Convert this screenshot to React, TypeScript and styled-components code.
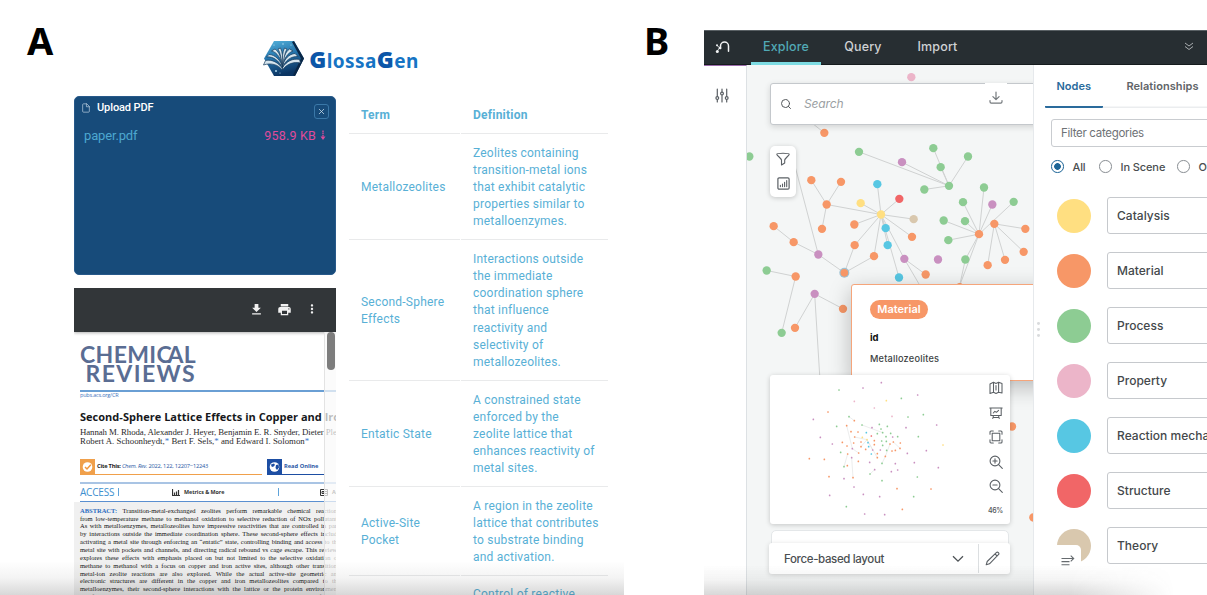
import React from 'react';
import styled, { createGlobalStyle } from 'styled-components';
import { FiFile, FiX, FiSearch } from 'react-icons/fi';
import { MdPrint, MdDownload, MdMoreVert } from 'react-icons/md';

const sans = `Roboto, "Liberation Sans", sans-serif`;
const inter = `Inter, "Liberation Sans", sans-serif`;
const serif = `"Liberation Serif", serif`;

const Global = createGlobalStyle`
  * { box-sizing: border-box; }
  html, body { margin: 0; padding: 0; background: #fff; overflow: hidden; }
  svg { display: block; flex: none; }
`;

const Figure = styled.main`
  display: flex;
  width: 1207px;
  height: 595px;
  overflow: hidden;
  background: #fff;
`;

const FigureLabel = styled.h2<{ $left: number }>`
  margin: 0;
  padding: 20.5px 0 0 ${p => p.$left}px;
  font: 700 38px/38px "Noto Sans", sans-serif;
  color: #000;
  height: 70px;
`;

/* ---------- Glossary app ---------- */

const GlossaryApp = styled.section`
  position: relative;
  width: 624px;
  height: 595px;
  flex: none;
  overflow: hidden;
`;

const BottomShade = styled.div<{ $h: number; $w: number; $fade?: boolean }>`
  position: absolute;
  left: 0;
  bottom: 0;
  width: ${p => p.$w}px;
  height: ${p => p.$h}px;
  pointer-events: none;
  background: linear-gradient(to bottom, rgba(60, 60, 60, 0), rgba(60, 60, 60, 0.06) 50%, rgba(60, 60, 60, 0.2));
  ${p => p.$fade && 'mask-image: linear-gradient(to right, #000 78%, transparent);'}
`;

const Masthead = styled.header`
  display: flex;
  height: 96px;
`;

const Brand = styled.div`
  display: flex;
  align-items: center;
  gap: 4px;
  padding: 21px 0 0 210px;
  height: 96px;
`;

const BrandName = styled.h1`
  margin: 0;
  padding-top: 3px;
  font: 700 19px/38px "Noto Sans", sans-serif;
  letter-spacing: 0.4px;
  color: #1674c4;
  b { font-size: 23px; color: #0c56a8; }
`;

const AppBody = styled.div`
  display: flex;
  gap: 13px;
  padding-left: 74px;
`;

const LeftColumn = styled.div`
  width: 262px;
  display: flex;
  flex-direction: column;
  gap: 13px;
`;

const UploadCard = styled.div`
  height: 179px;
  border-radius: 5px;
  background: #174b7a;
  border: 1px solid #27598a;
  font-family: ${sans};
`;

const UploadHead = styled.div`
  display: flex;
  align-items: center;
  height: 21px;
  padding: 0 6px 0 6px;
  color: #fff;
`;

const UploadTitle = styled.span`
  flex: 1;
  padding-left: 6px;
  font-size: 11px;
  font-weight: 500;
  letter-spacing: -0.1px;
`;

const CloseButton = styled.button`
  display: grid;
  place-items: center;
  width: 15px;
  height: 15px;
  margin-top: 7px;
  padding: 0;
  border: 1px solid #3a78a8;
  border-radius: 3px;
  background: transparent;
  color: #cfe0ee;
`;

const FileRow = styled.div`
  display: flex;
  justify-content: space-between;
  padding: 7.5px 9px 0 9px;
  font-size: 13px;
  line-height: 19px;
  letter-spacing: -0.15px;
  color: #4da7d0;
`;

const FileSize = styled.span`
  display: flex;
  align-items: center;
  gap: 4px;
  color: #e04a9a;
  font-size: 12.5px;
  letter-spacing: 0.2px;
`;

const Viewer = styled.div`
  height: 307px;
  overflow: hidden;
  background: #fff;
`;

const ViewerBar = styled.div`
  display: flex;
  align-items: center;
  justify-content: flex-end;
  gap: 13px;
  height: 44px;
  padding: 0 17.5px 2px 0;
  background: #323639;
  color: #f1f1f1;
  box-shadow: 0 1px 3px rgba(0, 0, 0, 0.3);
`;

const ViewerPage = styled.div`
  position: relative;
  width: 262px;
  height: 263px;
  overflow: hidden;
  white-space: nowrap;
  padding-top: 12.5px;
`;

const ScrollTrack = styled.div`
  position: absolute;
  right: 0;
  top: 0;
  width: 12px;
  height: 263px;
  padding: 0 2px;
  background: rgba(250, 250, 250, 0.72);
  border-left: 1px solid #e3e3e3;
`;

const ScrollThumb = styled.div`
  width: 8px;
  height: 38px;
  border-radius: 4px;
  background: #7d7d7d;
`;

const JournalLine = styled.div<{ $left: number; $ls: number }>`
  padding-left: ${p => p.$left}px;
  height: 19.7px;
  font: 700 23px/19.7px Lato, sans-serif;
  letter-spacing: ${p => p.$ls}px;
  color: #5a6d93;
`;

const TightA = styled.span`
  margin-left: -4.5px;
`;

const Rule = styled.div<{ $color: string; $top?: number }>`
  height: 1.4px;
  margin-left: 6px;
  margin-top: ${p => p.$top ?? 0}px;
  width: 256px;
  background: ${p => p.$color};
`;

const JournalUrl = styled.div`
  padding-left: 6px;
  height: 18px;
  font: 5.5px/7px "Open Sans", sans-serif;
  letter-spacing: -0.2px;
  color: #3f74bd;
`;

const PaperTitle = styled.div`
  padding-left: 6px;
  height: 18px;
  font: 700 11px/13px "Open Sans", sans-serif;
  letter-spacing: 0.02px;
  color: #16181b;
`;

const Authors = styled.div<{ $ls: number }>`
  padding-left: 6px;
  font: 8.8px/9.6px ${serif};
  letter-spacing: ${p => p.$ls}px;
  color: #2b2b2b;
  sup { font-size: 8.8px; line-height: 0; vertical-align: 0; color: #3a78d0; }
`;

const CiteRow = styled.div`
  display: flex;
  gap: 5px;
  margin: 12.5px 0 7px;
  padding-left: 6px;
  height: 16px;
  font: 5.7px/16px "Open Sans", sans-serif;
`;

const CiteBox = styled.div<{ $w: number; $color: string }>`
  display: flex;
  gap: 2px;
  width: ${p => p.$w}px;
  border-bottom: 1.5px solid ${p => p.$color};
  line-height: 15px;
  svg { background: ${p => p.$color}; }
`;

const CiteText = styled.span<{ $ls: number }>`
  letter-spacing: ${p => p.$ls}px;
  color: #2a57a5;
  b { color: #222; }
`;

const AccessRow = styled.div`
  display: flex;
  align-items: center;
  height: 17px;
  padding-left: 6px;
  color: #3d8fcf;
  font: 10px/17px "Open Sans", sans-serif;
`;

const AccessLabel = styled.span`
  flex: none;
  width: 35px;
  letter-spacing: -0.2px;
`;

const Bar = styled.div<{ $ml: number }>`
  flex: none;
  width: 1px;
  height: 8px;
  margin-left: ${p => p.$ml}px;
  background: #5fa3da;
`;

const AccessItem = styled.div<{ $ml: number; $w: number }>`
  display: flex;
  flex: none;
  align-items: center;
  gap: 4px;
  width: ${p => p.$w}px;
  margin-left: ${p => p.$ml}px;
  font: 700 5.4px/17px "Open Sans", sans-serif;
  letter-spacing: -0.05px;
  color: #333;
`;

const Abstract = styled.div`
  padding: 4.5px 0 0 6px;
  background: #f0f0f0;
  font: 6.5px/7.87px ${serif};
  color: #111;
`;

const AbstractLine = styled.div`
  width: 257px;
  height: 7.87px;
  text-align: justify;
  text-align-last: justify;
  b { color: #2c6cc0; }
`;

const Table = styled.div`
  width: 259px;
  font: 12px/17.1px ${sans};
  letter-spacing: 0.22px;
  color: #58b0d6;
`;

const TableRow = styled.div<{ $h: number; $head?: boolean }>`
  display: grid;
  grid-template-columns: 110.5px 147px;
  gap: 1.5px;
  height: ${p => p.$h}px;
  font-weight: ${p => (p.$head ? 700 : 400)};
`;

const Cell = styled.div<{ $pad?: number }>`
  display: flex;
  flex-direction: column;
  justify-content: center;
  padding-left: 12px;
  padding-top: ${p => p.$pad ?? 3}px;
  border-bottom: 1.5px solid #e9eaeb;
  white-space: nowrap;
`;

const TextLine = styled.span`
  display: block;
`;

/* ---------- Graph explorer ---------- */

const ExplorerFigure = styled.section`
  display: flex;
  width: 583px;
  height: 595px;
`;

const LabelColumn = styled.div`
  width: 80px;
  flex: none;
`;

const Explorer = styled.div`
  position: relative;
  display: flex;
  flex-direction: column;
  width: 503px;
  height: 565px;
  margin-top: 30px;
  overflow: hidden;
  font-family: ${inter};
`;

const NavBar = styled.nav`
  display: flex;
  height: 34.5px;
  background: #272e32;
  border-top: 1px solid #596064;
  border-bottom: 1px solid #151b1d;
`;

const NavLogo = styled.div`
  width: 47px;
  padding: 9px 0 0 10.5px;
`;

const NavItem = styled.a<{ $w: number; $active?: boolean }>`
  display: flex;
  justify-content: center;
  width: ${p => p.$w}px;
  height: 34px;
  border-bottom: 3.5px solid ${p => (p.$active ? '#7ddbe2' : 'transparent')};
  border-radius: 2px 2px 0 0;
  font: 500 12.5px/31.5px ${inter};
  letter-spacing: 0.15px;
  color: ${p => (p.$active ? '#51a9b5' : '#cfd2d4')};
`;

const NavMore = styled.div`
  margin-left: auto;
  padding: 11px 13px 0 0;
`;

const Workspace = styled.div`
  display: flex;
  flex: 1;
`;

const SideRail = styled.aside`
  width: 43px;
  padding: 22px 0 0 11px;
  border-top: 1px solid #9b6bab;
  border-right: 1px solid #dde1e4;
  background: #fff;
`;

const Canvas = styled.div`
  position: relative;
  width: 286px;
  overflow: hidden;
  background: #f4f6f6;
`;

const SearchBar = styled.div`
  position: absolute;
  left: 23px;
  top: 18.5px;
  display: flex;
  align-items: center;
  width: 280px;
  height: 42px;
  padding-left: 9px;
  border: 1px solid #c4c8cc;
  border-radius: 3px;
  background: #fff;
  box-shadow: 0 2px 6px rgba(0, 0, 0, 0.14);
  color: #55595c;
`;

const SearchHint = styled.span`
  flex: none;
  width: 193px;
  padding-left: 12px;
  font: italic 12px/20px ${inter};
  letter-spacing: -0.15px;
  color: #9b9fa3;
`;

const DownloadButton = styled.div`
  display: flex;
  align-items: center;
  justify-content: center;
  align-self: flex-start;
  width: 22px;
  height: 36px;
  margin-top: -1px;
  padding-bottom: 8px;
  background: #fff;
`;

const ToolCard = styled.div`
  position: absolute;
  left: 23px;
  top: 81.5px;
  display: flex;
  flex-direction: column;
  align-items: center;
  gap: 11px;
  width: 26px;
  height: 51px;
  padding-top: 6px;
  border-radius: 5px;
  background: #fff;
  box-shadow: 0 1px 5px rgba(0, 0, 0, 0.2);
`;

const NodePopover = styled.div`
  position: absolute;
  left: 104px;
  top: 219.5px;
  width: 210px;
  height: 96.5px;
  padding: 15px 0 0 18px;
  border: 1.3px solid #f5a57b;
  border-radius: 3px;
  background: #fff;
  box-shadow: 0 6px 22px rgba(0, 0, 0, 0.25);
`;

const Pill = styled.span`
  display: block;
  width: 58px;
  height: 19px;
  border-radius: 10px;
  background: #f79767;
  color: #fff;
  text-align: center;
  font: 600 11px/19px ${inter};
`;

const PropName = styled.div`
  padding-top: 12px;
  font: 700 9.5px/14px ${inter};
  color: #111;
`;

const PropValue = styled.div`
  padding-top: 7px;
  font: 500 9.2px/14px ${inter};
  letter-spacing: 0.2px;
  color: #3c3f42;
`;

const MiniMap = styled.div`
  position: absolute;
  left: 23px;
  top: 310px;
  display: flex;
  width: 239.5px;
  height: 149.5px;
  border-radius: 3px;
  background: #fff;
  box-shadow: 0 1px 5px rgba(0, 0, 0, 0.2);
`;

const MapTools = styled.div`
  display: flex;
  flex-direction: column;
  align-items: center;
  gap: 10.5px;
  width: 28px;
  padding-top: 6.5px;
`;

const ZoomLevel = styled.span`
  font: 500 7px/9px ${inter};
  letter-spacing: -0.3px;
  color: #505458;
  padding-top: 2px;
`;

const BackCard = styled.div`
  position: absolute;
  left: 23.5px;
  top: 465px;
  width: 238px;
  height: 24px;
  border: 1px solid #e4e7e9;
  border-radius: 5px;
  background: #fff;
`;

const LayoutPicker = styled.div`
  position: absolute;
  left: 22px;
  top: 478.5px;
  display: flex;
  align-items: center;
  width: 240.5px;
  height: 31px;
  border-radius: 3px;
  background: #fff;
  box-shadow: 0 1px 5px rgba(0, 0, 0, 0.16);
`;

const LayoutName = styled.span`
  width: 183px;
  padding-left: 15px;
  font: 500 11.5px/30px ${inter};
  letter-spacing: -0.36px;
  color: #4b4f52;
`;

const PencilSlot = styled.div`
  display: grid;
  place-items: center;
  width: 30px;
  height: 29px;
  margin-left: 14px;
  padding-right: 2px;
  border-left: 1px solid #dcdfe1;
`;

const CategoryPanel = styled.aside`
  position: relative;
  width: 174px;
  flex: none;
  border-left: 1px solid #e6e9ec;
  background: #fff;
  overflow: hidden;
  white-space: nowrap;
`;

const Tabs = styled.div`
  display: flex;
  gap: 10px;
  height: 43px;
  padding-left: 11px;
  box-shadow: inset 12px 0 #fff, inset 0 -1.5px #ebedef;
`;

const Tab = styled.a<{ $w: number; $active?: boolean }>`
  width: ${p => p.$w}px;
  flex: none;
  text-align: center;
  border-bottom: 2.5px solid ${p => (p.$active ? '#2a6b9c' : 'transparent')};
  border-radius: 1px;
  font: 600 11px/43px ${inter};
  letter-spacing: 0.05px;
  color: ${p => (p.$active ? '#2a6b9c' : '#5f6468')};
`;

const FilterInput = styled.div`
  width: 180px;
  height: 27.5px;
  margin: 11.5px 0 0 17px;
  padding-left: 9px;
  border: 1px solid #c9ccd0;
  border-radius: 3px;
  font: 11.5px/27px ${inter};
  letter-spacing: -0.3px;
  color: #6e7276;
`;

const RadioRow = styled.div`
  display: flex;
  align-items: center;
  height: 20px;
  margin: 10px 0 11.5px 17px;
  font: 500 11px/20px ${inter};
  color: #4a4e51;
`;

const Radio = styled.i<{ $on?: boolean }>`
  flex: none;
  width: 12.5px;
  height: 12.5px;
  border-radius: 50%;
  border: ${p => (p.$on ? '1.5px solid #1d6597' : '1.2px solid #8a8f94')};
  background: ${p => (p.$on ? 'radial-gradient(circle, #1d6597 0 3px, #fff 3.7px)' : '#fff')};
`;

const RadioText = styled.span<{ $w: number }>`
  flex: none;
  width: ${p => p.$w}px;
  padding-left: 9px;
  letter-spacing: -0.1px;
`;

const CategoryRow = styled.div`
  display: flex;
  align-items: center;
  gap: 16px;
  height: 55px;
  padding-left: 23px;
`;

const Swatch = styled.i<{ $color: string }>`
  flex: none;
  width: 34px;
  height: 34px;
  border-radius: 50%;
  background: ${p => p.$color};
`;

const CategoryName = styled.div`
  flex: none;
  width: 120px;
  height: 36.5px;
  padding-left: 9px;
  border: 1px solid #c6c9cd;
  border-radius: 3px;
  font: 500 12px/35px ${inter};
  letter-spacing: 0.02px;
  color: #44484b;
`;

const DragHandle = styled.div`
  position: absolute;
  left: 3px;
  top: 257px;
  display: flex;
  flex-direction: column;
  gap: 3px;
  i { width: 3.4px; height: 3.2px; border-radius: 50%; background: #d9dbdd; }
`;

const CollapseButton = styled.div`
  position: absolute;
  left: 16px;
  top: 480px;
  width: 31px;
  height: 35px;
  padding: 10px 0 0 11px;
  border-radius: 0 5px 0 0;
  background: #fff;
`;

const ORANGE = '#f79767', GREEN = '#8dcc93', PURPLE = '#c990c0', BLUE = '#57c7e3';
const YELLOW = '#ffdf81', RED = '#f16667', TAN = '#d9c8ae', PINK = '#ecb5c9';

const graphNodes: [number, number, string][] = [
  [253, 37, ORANGE], [28, 108, GREEN], [357, 94, GREEN], [486, 125, PURPLE], [580, 83, GREEN],
  [602, 140, GREEN], [684, 108, GREEN], [627, 196, GREEN], [553, 207, GREEN], [732, 201, GREEN],
  [669, 245, GREEN], [757, 252, PURPLE], [821, 244, GREEN], [611, 300, GREEN], [675, 302, GREEN],
  [717, 341, ORANGE], [763, 310, ORANGE], [856, 325, ORANGE], [625, 359, GREEN], [851, 394, ORANGE],
  [795, 418, ORANGE], [743, 434, ORANGE], [676, 417, GREEN], [659, 500, ORANGE], [214, 179, ORANGE],
  [303, 184, ORANGE], [260, 252, ORANGE], [246, 325, ORANGE], [412, 191, BLUE], [478, 235, RED],
  [362, 248, YELLOW], [423, 282, YELLOW], [521, 296, TAN], [343, 312, ORANGE], [437, 323, BLUE],
  [443, 374, BLUE], [516, 349, ORANGE], [344, 374, ORANGE], [402, 407, ORANGE], [493, 415, PURPLE],
  [594, 417, PURPLE], [557, 462, ORANGE], [477, 471, BLUE], [235, 402, PURPLE], [101, 317, ORANGE],
  [161, 365, ORANGE], [80, 450, GREEN], [167, 468, ORANGE], [224, 520, PURPLE], [309, 565, ORANGE],
  [165, 622, ORANGE], [125, 637, GREEN], [514, -130, PINK], [816, 918, ORANGE], [880, 1191, ORANGE],
];

const graphEdges: [number, number, number, number][] = [
  [200, -5, 253, 37], [357, 94, 627, 196], [486, 125, 627, 196], [580, 83, 627, 196], [602, 140, 627, 196],
  [684, 108, 627, 196], [553, 207, 627, 196], [732, 201, 717, 341], [669, 245, 717, 341], [757, 252, 717, 341],
  [821, 244, 717, 341], [611, 300, 717, 341], [675, 302, 717, 341], [625, 359, 717, 341], [676, 417, 717, 341],
  [659, 495, 717, 341], [676, 417, 659, 495], [763, 310, 856, 325], [763, 310, 851, 394], [763, 310, 795, 418],
  [763, 310, 743, 434], [214, 179, 260, 252], [303, 184, 260, 252], [246, 325, 260, 252], [260, 252, 423, 282],
  [412, 191, 423, 282], [478, 235, 423, 282], [362, 248, 423, 282], [521, 296, 423, 282], [343, 312, 423, 282],
  [437, 323, 423, 282], [443, 374, 423, 282], [516, 349, 423, 282], [344, 374, 423, 282], [402, 407, 423, 282],
  [493, 415, 423, 282], [477, 471, 423, 282], [344, 374, 313, 457], [402, 407, 313, 457], [235, 402, 313, 457],
  [235, 402, 161, 365], [101, 317, 161, 365], [150, 80, 235, 402], [80, 450, 167, 468], [167, 468, 125, 637],
  [224, 520, 309, 565], [224, 520, 165, 622], [224, 520, 240, 780], [493, 415, 557, 462], [493, 415, 560, 530],
];

const miniDots: [string, number[][]][] = [
  [PURPLE, [[364, 337], [309, 353], [473, 374], [160, 447], [181, 501], [217, 521], [530, 464], [438, 472], [336, 472],
    [499, 541], [442, 549], [463, 577], [535, 592], [406, 580], [413, 599], [394, 604], [344, 598], [329, 576], [277, 535],
    [275, 562], [252, 625], [282, 650], [310, 672], [359, 679], [209, 675], [314, 731], [374, 733], [361, 539], [338, 539], [398, 500]]],
  [GREEN, [[237, 359], [424, 384], [490, 433], [444, 440], [267, 439], [306, 464], [230, 468], [358, 462], [382, 468],
    [363, 476], [368, 487], [392, 489], [352, 490], [378, 499], [413, 499], [475, 499], [365, 512], [379, 513], [368, 525],
    [380, 540], [366, 579], [242, 546], [252, 589], [330, 611], [366, 631], [472, 620], [461, 679], [259, 709]]],
  [ORANGE, [[204, 425], [283, 451], [260, 466], [273, 484], [294, 485], [284, 500], [303, 515], [247, 516], [281, 518],
    [261, 527], [303, 529], [317, 537], [343, 511], [343, 523], [296, 548], [263, 551], [352, 550], [352, 562], [376, 558],
    [390, 521], [400, 515], [421, 518], [420, 534], [406, 540], [396, 542], [148, 565], [193, 567], [295, 573], [262, 586],
    [207, 619], [279, 622], [411, 655], [513, 656], [427, 717]]],
  [BLUE, [[319, 487], [324, 517], [326, 529], [334, 551]]],
  [YELLOW, [[379, 391], [549, 524], [307, 501], [321, 508]]],
  [PINK, [[283, 393], [343, 413], [396, 438]]],
  [RED, [[334, 497]]],
];

const glossary = [
  { h: 106, term: ['Metallozeolites'], def: ['Zeolites containing', 'transition-metal ions', 'that exhibit catalytic', 'properties similar to', 'metalloenzymes.'] },
  { h: 140.5, term: ['Second-Sphere', 'Effects'], def: ['Interactions outside', 'the immediate', 'coordination sphere', 'that influence', 'reactivity and', 'selectivity of', 'metallozeolites.'] },
  { h: 106.5, term: ['Entatic State'], def: ['A constrained state', 'enforced by the', 'zeolite lattice that', 'enhances reactivity of', 'metal sites.'] },
  { h: 88.5, term: ['Active-Site', 'Pocket'], def: ['A region in the zeolite', 'lattice that contributes', 'to substrate binding', 'and activation.'] },
  { h: 88.5, term: [''], def: ['Control of reactive', 'intermediates by', 'the surrounding', 'lattice.'] },
];

const abstractLines = [
  'Transition-metal-exchanged zeolites perform remarkable chemical reaction',
  'from low-temperature methane to methanol oxidation to selective reduction of NOx pollutant',
  'As with metalloenzymes, metallozeolites have impressive reactivities that are controlled in par',
  'by interactions outside the immediate coordination sphere. These second-sphere effects includ',
  'activating a metal site through enforcing an “entatic” state, controlling binding and access to th',
  'metal site with pockets and channels, and directing radical rebound vs cage escape. This review',
  'explores these effects with emphasis placed on but not limited to the selective oxidation o',
  'methane to methanol with a focus on copper and iron active sites, although other transition',
  'metal-ion zeolite reactions are also explored. While the actual active-site geometric an',
  'electronic structures are different in the copper and iron metallozeolites compared to th',
  'metalloenzymes, their second-sphere interactions with the lattice or the protein environmen',
  'are found to have strong parallels that have allowed a mechanistic interpretation of their',
];

const categories: [string, string][] = [
  ['Catalysis', YELLOW], ['Material', ORANGE], ['Process', GREEN], ['Property', PINK],
  ['Reaction mechanism', BLUE], ['Structure', RED], ['Theory', TAN],
];

const BookLogo = () => (
  <svg width="42" height="37" viewBox="0 0 42 37">
    <defs>
      <linearGradient id="hex" x1="0" y1="0" x2="0.3" y2="1">
        <stop offset="0" stopColor="#56b4dc" /><stop offset="0.5" stopColor="#2474ac" /><stop offset="1" stopColor="#0b3563" />
      </linearGradient>
    </defs>
    <path d="M11 1h20l10 17.5L32 36H11L1 18.5z" fill="url(#hex)" />
    <path d="M31 1l10 17.5L32 36l-2-1 8-16.5L29 2z" fill="#0a2747" />
    <g fill="#d6e5ee" stroke="#173b5c" strokeWidth="0.7" strokeLinejoin="round">
      <path d="M19.500 30C15 24.500 8 22.500 .5 25l2-4.500c7-1.500 13 2.500 17 8z" />
      <path d="M19.500 30c4-6 11-8.500 18-7l-1-3.500c-7-1.500-13 2-17 8z" />
      <path d="M19.500 28C16.500 21 10 16 3.500 17l2.500-2.500c6 0 11.500 6 13.500 12z" />
      <path d="M19.500 28c2-7 8.500-12 15.500-11.500L32 13.500c-6 .5-10.500 5.500-12.500 12z" />
      <path d="M19.500 27C18.500 19 14 12 8.500 11l3.500-2c4.500 3 6.500 10 7.500 16z" />
      <path d="M19.500 27c1-8 5.500-14.500 10.500-16L26.500 9c-4.500 3-6.500 10-7 16z" />
      <path d="M19.500 26c-1.500-7.500-2-13-4.500-17l2.500-1c2 4 2.300 9 2 16z" />
      <path d="M19.500 26c1.500-7.500 2-13 4.500-17l-2.500-1c-2 4-2.300 9-2 16z" />
    </g>
    <g fill="#bfe6f8"><circle cx="13" cy="31" r="0.9" /><circle cx="11" cy="5" r="0.6" /><circle cx="20" cy="4" r="0.7" /><circle cx="28" cy="5" r="0.6" /><circle cx="17" cy="33" r="0.5" /></g>
  </svg>
);

const stroke = { fill: 'none', stroke: '#5b6065', strokeWidth: 1.2, strokeLinecap: 'round', strokeLinejoin: 'round' } as const;

const GraphLogo = () => (
  <svg width="15" height="14" viewBox="0 0 15 14">
    <path d="M5.5 8.5V6a4 4 0 0 1 8 0v5.2" fill="none" stroke="#f2f4f5" strokeWidth="1.5" strokeLinecap="round" />
    <path d="M2 5.5l2.600 2.200L2 11.500" fill="none" stroke="#f2f4f5" strokeWidth="0.800" />
    <g fill="#f2f4f5"><circle cx="2" cy="5.300" r="1" /><circle cx="5" cy="8" r="1.300" /><circle cx="2.300" cy="11.600" r="1.500" /></g>
  </svg>
);

const SlidersIcon = () => (
  <svg width="14" height="15" viewBox="0 0 14 15" {...stroke}>
    <path d="M2.3 1v7.5M2.3 11.8V14M7 1v3M7 7.3V14M11.7 1v7.5M11.7 11.8V14" />
    <circle cx="2.3" cy="10.1" r="1.4" /><circle cx="7" cy="5.6" r="1.4" /><circle cx="11.7" cy="10.1" r="1.4" />
  </svg>
);

const TrayDownIcon = () => (
  <svg width="14" height="13" viewBox="0 0 14 13" {...stroke} stroke="#74797d">
    <path d="M7 1v7.5M3.9 5.6L7 8.7l3.1-3.1M1 9.5v1.3a1.3 1.3 0 0 0 1.3 1.3h9.4a1.3 1.3 0 0 0 1.3-1.3V9.5" />
  </svg>
);

const FunnelIcon = () => (
  <svg width="14" height="14" viewBox="0 0 14 14" {...stroke} strokeWidth="1.100">
    <path d="M.8 2.200C.8.900 13.200.900 13.200 2.200c0 1.300-4.500 4.200-4.500 6V11l-3.200 2V8.200C5.500 6.400.8 3.500.8 2.200z" />
  </svg>
);

const ChartBoxIcon = () => (
  <svg width="13" height="13" viewBox="0 0 13 13" {...stroke}>
    <rect x="0.9" y="0.9" width="11.200" height="11.200" rx="1.200" />
    <path d="M3.400 9.600v-1.200M5.500 9.600V7M7.600 9.600V5.300M9.700 9.600V3.500" strokeWidth="1.100" />
  </svg>
);

const MapIcon = () => (
  <svg width="14" height="14" viewBox="0 0 14 14" {...stroke} strokeWidth="1.050">
    <path d="M1 3l3.500-1.700L7 2.400l2.600-1.100L13 2.500v9.500l-3.400-.8L7 12.400l-2.500-1.100L1 12.500zM4.500 1.500v9.700M9.600 1.500v9.500M7 4.500v4.500" />
  </svg>
);

const BoardIcon = () => (
  <svg width="14" height="14" viewBox="0 0 14 14" {...stroke} strokeWidth="1.050">
    <path d="M.8 2h12.400M1.800 2v7.500h10.400V2M4.500 9.500L3.800 12.500M9.500 9.500l.7 3M4 11.500h6M4.300 7l1.500-1.600 1.600.9 2.200-1.900" />
  </svg>
);

const FitIcon = () => (
  <svg width="14" height="14" viewBox="0 0 14 14" {...stroke} strokeWidth="1.050">
    <path d="M1 4.300V2a1 1 0 0 1 1-1h2.300M9.700 1H12a1 1 0 0 1 1 1v2.300M13 9.700V12a1 1 0 0 1-1 1H9.700M4.300 13H2a1 1 0 0 1-1-1V9.700" />
    <rect x="3.200" y="3.200" width="7.600" height="7.600" />
  </svg>
);

const ZoomIcon = ({ plus }: { plus?: boolean }) => (
  <svg width="14" height="14" viewBox="0 0 14 14" {...stroke} strokeWidth="1.100">
    <circle cx="6" cy="6" r="4.900" /><path d="M9.600 9.600L13.300 13.300M3.900 6h4.200" />{plus && <path d="M6 3.900v4.200" />}
  </svg>
);

const PencilIcon = () => (
  <svg width="15" height="15" viewBox="0 0 15 15" {...stroke} strokeWidth="1.100">
    <path d="M1.200 13.800l1-3.300L11.300 1.600a1.350 1.350 0 0 1 2.100 2.100L4.500 12.800zM10 2.900l2.100 2.100" />
  </svg>
);

export default function App() {
  return (
    <>
      <Global />
      <Figure>
        <GlossaryApp>
          <Masthead>
            <FigureLabel $left={27}>A</FigureLabel>
            <Brand>
              <BookLogo />
              <BrandName><b>G</b>lossa<b>G</b>en</BrandName>
            </Brand>
          </Masthead>
          <AppBody>
            <LeftColumn>
              <UploadCard>
                <UploadHead>
                  <FiFile size={10} strokeWidth={1.6} color="#c4d6e6" />
                  <UploadTitle>Upload PDF</UploadTitle>
                  <CloseButton><FiX size={9} /></CloseButton>
                </UploadHead>
                <FileRow>
                  <span>paper.pdf</span>
                  <FileSize>
                    958.9 KB
                    <svg width="6" height="11" viewBox="0 0 6 11">
                      <path d="M3 .5v6.500" stroke="#e04a9a" strokeWidth="1.300" strokeDasharray="1.500 .6" />
                      <path d="M.5 6.500h5L3 10z" fill="#e04a9a" />
                    </svg>
                  </FileSize>
                </FileRow>
              </UploadCard>
              <Viewer>
                <ViewerBar>
                  <MdDownload size={15} /><MdPrint size={15} /><MdMoreVert size={14} />
                </ViewerBar>
                <ViewerPage>
                  <JournalLine $left={6} $ls={0.35}>CHEMIC<TightA>A</TightA>L</JournalLine>
                  <JournalLine $left={11.5} $ls={1.4}>REVIEWS</JournalLine>
                  <Rule $color="#6a9fd4" $top={6.5} />
                  <JournalUrl>pubs.acs.org/CR</JournalUrl>
                  <PaperTitle>Second-Sphere Lattice Effects in Copper and Iron</PaperTitle>
                  <Authors $ls={-0.07}>Hannah M. Rhoda, Alexander J. Heyer, Benjamin E. R. Snyder, Dieter Plessers</Authors>
                  <Authors $ls={0.01}>Robert A. Schoonheydt,<sup>*</sup> Bert F. Sels,<sup>*</sup> and Edward I. Solomon<sup>*</sup></Authors>
                  <CiteRow>
                    <CiteBox $w={182} $color="#f0a04b">
                      <svg width="15" height="16" viewBox="0 0 15 16">
                        <circle cx="7.500" cy="8" r="4.800" fill="#fff" /><path d="M5 8l2 2 3.800-4.200" fill="none" stroke="#f0963c" strokeWidth="1.500" />
                      </svg>
                      <CiteText $ls={-0.22}><b>Cite This:</b> <i>Chem. Rev.</i> 2022, 122, 12207−12243</CiteText>
                    </CiteBox>
                    <CiteBox $w={57} $color="#1d4ea3">
                      <svg width="15" height="16" viewBox="0 0 15 16">
                        <circle cx="7.500" cy="8" r="4.800" fill="#fff" /><path d="M4 5.500l3-1 1 1.500-2 2-1.500-.5zM9 6l2.500-.5.500 3-2 2.500-1.500-2z" fill="#1d4ea3" />
                      </svg>
                      <CiteText $ls={0}><strong>Read Online</strong></CiteText>
                    </CiteBox>
                  </CiteRow>
                  <Rule $color="#a9c4e4" />
                  <AccessRow>
                    <AccessLabel>ACCESS</AccessLabel>
                    <Bar $ml={3} />
                    <AccessItem $ml={53} $w={52}>
                      <svg width="8" height="7" viewBox="0 0 8 7"><path d="M.5 0v6.500H8M2.500 6V3.500M4.500 6V2.500M6.500 6V1" fill="none" stroke="#333" strokeWidth="1.200" /></svg>
                      Metrics &amp; More
                    </AccessItem>
                    <Bar $ml={54} />
                    <AccessItem $ml={41} $w={52}>
                      <svg width="8" height="7" viewBox="0 0 8 7"><path d="M.5.500h7v6h-7zM2 2.500h2v2H2zM5 2.500h2M5 4.500h2" fill="none" stroke="#333" /></svg>
                      Article
                    </AccessItem>
                  </AccessRow>
                  <Rule $color="#5a8fd0" />
                  <Abstract>
                    {abstractLines.map((line, i) => (
                      <AbstractLine key={i}>{i === 0 && <b>ABSTRACT: </b>}{line}</AbstractLine>
                    ))}
                  </Abstract>
                  <ScrollTrack><ScrollThumb /></ScrollTrack>
                </ViewerPage>
              </Viewer>
            </LeftColumn>
            <Table>
              <TableRow $h={38} $head><Cell>Term</Cell><Cell>Definition</Cell></TableRow>
              {glossary.map((row, i) => (
                <TableRow key={i} $h={row.h}>
                  <Cell $pad={2.5}>{row.term.map(t => <TextLine key={t}>{t}</TextLine>)}</Cell>
                  <Cell $pad={2.5}>{row.def.map(t => <TextLine key={t}>{t}</TextLine>)}</Cell>
                </TableRow>
              ))}
            </Table>
          </AppBody>
          <BottomShade $h={34} $w={624} />
        </GlossaryApp>

        <ExplorerFigure>
          <LabelColumn><FigureLabel $left={20}>B</FigureLabel></LabelColumn>
          <Explorer>
            <NavBar>
              <NavLogo><GraphLogo /></NavLogo>
              <NavItem $w={70} $active>Explore</NavItem>
              <NavItem $w={84}>Query</NavItem>
              <NavItem $w={65}>Import</NavItem>
              <NavMore>
                <svg width="10" height="9" viewBox="0 0 10 9" fill="none" stroke="#a9adb0" strokeWidth="1"><path d="M1 1l4 3 4-3M1 4.500l4 3 4-3" /></svg>
              </NavMore>
            </NavBar>
            <Workspace>
              <SideRail><SlidersIcon /></SideRail>
              <Canvas>
                <svg width="286" height="531" viewBox="21 -166.500 858 1593">
                  <g stroke="#d0d2d2" strokeWidth="3">
                    {graphEdges.map(([a, b, c, d], i) => <line key={i} x1={a} y1={b} x2={c} y2={d} />)}
                  </g>
                  {graphNodes.map(([x, y, c], i) => <circle key={i} cx={x} cy={y} r="12.500" fill={c} />)}
                  <circle cx="313" cy="457" r="15" fill="#9fc3d4" />
                  <circle cx="313" cy="457" r="11.500" fill={ORANGE} />
                </svg>
                <SearchBar>
                  <FiSearch size={12} />
                  <SearchHint>Search</SearchHint>
                  <DownloadButton><TrayDownIcon /></DownloadButton>
                </SearchBar>
                <ToolCard><FunnelIcon /><ChartBoxIcon /></ToolCard>
                <NodePopover>
                  <Pill>Material</Pill>
                  <PropName>id</PropName>
                  <PropValue>Metallozeolites</PropValue>
                </NodePopover>
                <MiniMap>
                  <svg width="211.500" height="149.500" viewBox="30 314 634.500 448.500">
                    <g stroke="#e2e4e4" strokeWidth="2">
                      <path d="M306 464l62 23M267 439l16 12M260 466l17 69M277 535l19 13M275 562l4 60M263 551l-11 38M321 508l-18 21M321 508l17 31M321 508l31 54M376 558l-10 21M390 521l-14 37M400 515l20 19M284 500l37 8M344 598l-14 13" fill="none" />
                    </g>
                    {miniDots.map(([color, pts]) => pts.map(([x, y]) => (
                      <rect key={`${x}-${y}`} x={x - 2.4} y={y - 2.4} width="4.800" height="4.800" rx="1.500" fill={color} />
                    )))}
                  </svg>
                  <MapTools>
                    <MapIcon /><BoardIcon /><FitIcon /><ZoomIcon plus /><ZoomIcon />
                    <ZoomLevel>46%</ZoomLevel>
                  </MapTools>
                </MiniMap>
                <BackCard />
                <LayoutPicker>
                  <LayoutName>Force-based layout</LayoutName>
                  <svg width="12" height="8" viewBox="0 0 12 8" fill="none" stroke="#4d5256" strokeWidth="1.300"><path d="M1 1.200l5 5 5-5" /></svg>
                  <PencilSlot><PencilIcon /></PencilSlot>
                </LayoutPicker>
              </Canvas>
              <CategoryPanel>
                <Tabs>
                  <Tab $w={57.5} $active>Nodes</Tab>
                  <Tab $w={100}>Relationships</Tab>
                </Tabs>
                <FilterInput>Filter categories</FilterInput>
                <RadioRow>
                  <Radio $on /><RadioText $w={35.5}>All</RadioText>
                  <Radio /><RadioText $w={65.5}>In Scene</RadioText>
                  <Radio /><RadioText $w={90}>Out of Scene</RadioText>
                </RadioRow>
                {categories.map(([name, color]) => (
                  <CategoryRow key={name}>
                    <Swatch $color={color} />
                    <CategoryName>{name}</CategoryName>
                  </CategoryRow>
                ))}
                <DragHandle><i /><i /><i /></DragHandle>
                <CollapseButton>
                  <svg width="14" height="11" viewBox="0 0 14 11" fill="none" stroke="#666b6f" strokeWidth="1.100"><path d="M.5 3.500h12M9.700.700l3 2.800-3 2.800M.5 6.600h8M.5 9.700h8" /></svg>
                </CollapseButton>
              </CategoryPanel>
            </Workspace>
            <BottomShade $h={30} $w={470} $fade />
          </Explorer>
        </ExplorerFigure>
      </Figure>
    </>
  );
}
